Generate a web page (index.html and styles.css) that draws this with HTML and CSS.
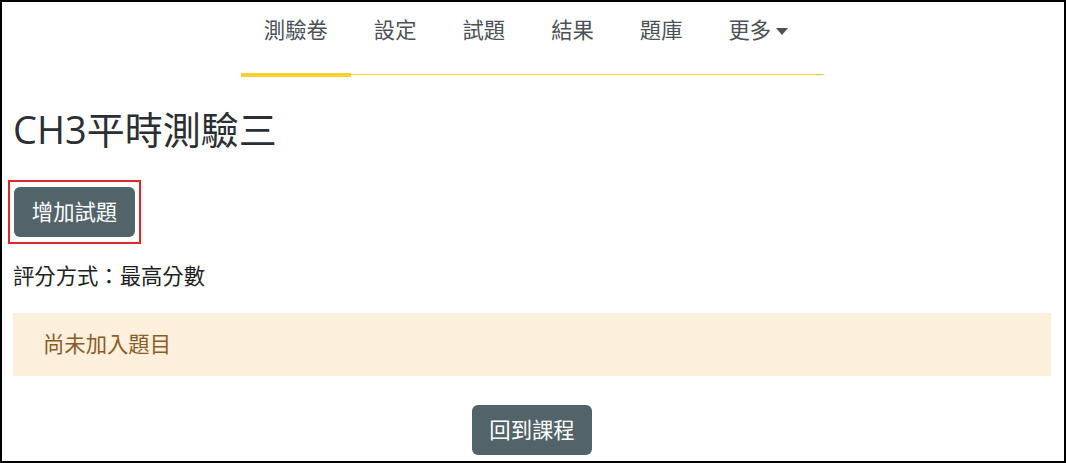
FILE: index.html
```html
<!DOCTYPE html>
<html lang="zh-Hant">
<head>
<meta charset="utf-8">
<title>CH3平時測驗三</title>
<link rel="stylesheet" href="styles.css">
</head>
<body>
<div class="page">
  <nav class="tabs">
    <ul class="tab-list">
      <li><a class="tab active" href="#">測驗卷</a></li>
      <li><a class="tab" href="#">設定</a></li>
      <li><a class="tab" href="#">試題</a></li>
      <li><a class="tab" href="#">結果</a></li>
      <li><a class="tab" href="#">題庫</a></li>
      <li><a class="tab more" href="#">更多<span class="caret"></span></a></li>
    </ul>
  </nav>
  <main class="content">
    <h2 class="title">CH3平時測驗三</h2>
    <div class="highlight">
      <button class="btn" type="button">增加試題</button>
    </div>
    <p class="grading">評分方式：最高分數</p>
    <div class="alert">尚未加入題目</div>
    <div class="center">
      <button class="btn" type="button">回到課程</button>
    </div>
  </main>
</div>
</body>
</html>
```
FILE: styles.css
```css
html, body {
  margin: 0;
  padding: 0;
  background: #fff;
}
.page {
  box-sizing: border-box;
  width: 1066px;
  height: 463px;
  border: 2px solid #000;
  overflow: hidden;
  font-family: "Open Sans", "Noto Sans CJK TC", sans-serif;
  font-size: 21.33px;
  color: #1d2125;
}
.tabs {
  display: flex;
  justify-content: center;
}
.tab-list {
  display: flex;
  list-style: none;
  margin: 0 0 0 -1px;
  padding: 0 13px 0 0;
  border-bottom: 1px solid #fcd02e;
}
.tab {
  position: relative;
  display: flex;
  align-items: center;
  padding: 12px 23px 28px;
  line-height: 32px;
  color: #4a5158;
  text-decoration: none;
}
.tab.active::after {
  content: "";
  position: absolute;
  left: 0;
  right: 0;
  bottom: -3px;
  height: 4px;
  background: #fcd02e;
}
.caret {
  display: inline-block;
  width: 0;
  height: 0;
  margin-left: 5px;
  margin-top: 2px;
  border-left: 6px solid transparent;
  border-right: 6px solid transparent;
  border-top: 7px solid #4a5158;
}
.content {
  padding: 0 13px 0 11px;
}
.title {
  margin: 31px 0 28px;
  font-size: 38px;
  font-weight: 400;
  line-height: 46px;
  color: #2b2f33;
}
.highlight {
  display: inline-block;
  margin-left: -5px;
  padding: 5px 4px;
  border: 2px solid #e0262b;
}
.btn {
  display: block;
  margin: 0;
  padding: 9px 17.8px;
  border: 0;
  border-radius: 6px;
  background: #52646a;
  color: #fff;
  font-family: "Open Sans", "Noto Sans CJK TC", sans-serif;
  font-size: 21.33px;
  line-height: 32px;
}
.grading {
  margin: 16px 0 21px;
  line-height: 32px;
}
.alert {
  padding: 15px 30px 16px;
  line-height: 32px;
  background: #fcefdc;
  color: #8a5d25;
}
.center {
  display: flex;
  justify-content: center;
  margin-top: 29px;
}
```
